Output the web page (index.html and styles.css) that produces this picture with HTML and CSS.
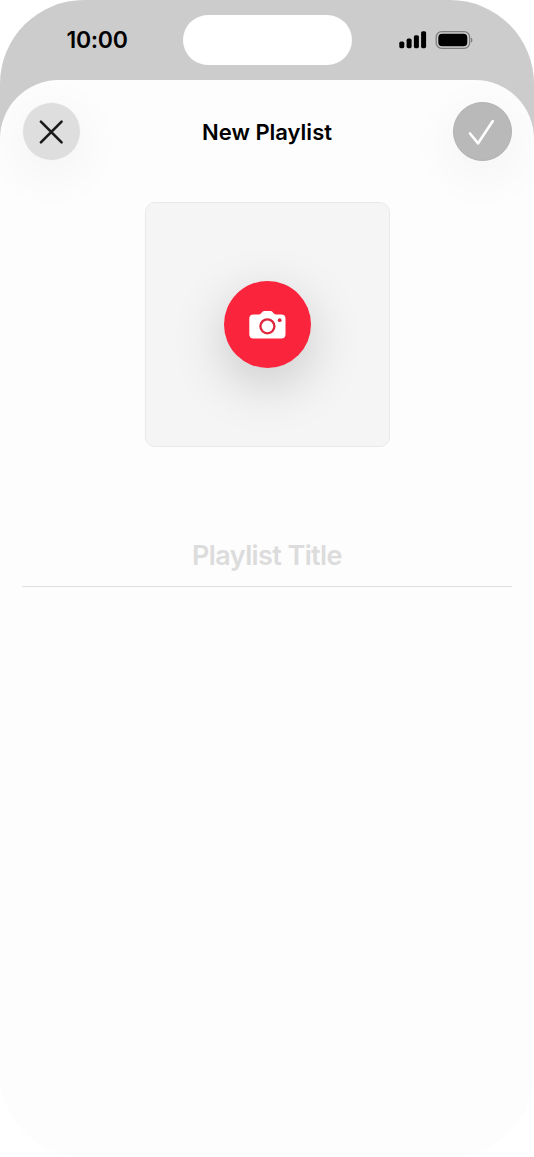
FILE: index.html
```html
<!DOCTYPE html>
<html lang="en">
<head>
    <meta charset="UTF-8">
    <meta name="viewport" content="width=device-width, initial-scale=1.0">
    <title>New Playlist</title>
    <link rel="stylesheet" href="styles.css">
</head>
<body>

    <div class="phone">
        <!-- Status Bar -->
        <header class="status-bar">
            <span class="time">10:00</span>
            <div class="island"></div>
            <div class="status-icons">
                <svg class="signal" width="28" height="18" viewBox="0 0 28 18">
                    <rect x="0.3" y="10.6" width="5" height="6.6" rx="1.6"/>
                    <rect x="7.6" y="7.6" width="5" height="9.6" rx="1.6"/>
                    <rect x="14.9" y="4.2" width="5" height="13" rx="1.6"/>
                    <rect x="22.1" y="0.2" width="5" height="17" rx="1.6"/>
                </svg>
                <svg class="battery" width="38" height="18" viewBox="0 0 38 18">
                    <rect x="1.2" y="0.7" width="33.4" height="16.6" rx="5.4" fill="none" stroke="#7f7f7f" stroke-width="1.3"/>
                    <rect x="3.3" y="2.7" width="29" height="12.6" rx="3.8"/>
                    <path d="M35.9 6.4c2 .7 2 4.5 0 5.2z" fill="#7f7f7f"/>
                </svg>
            </div>
        </header>

        <!-- New Playlist Sheet -->
        <main class="sheet">
            <div class="nav-bar">
                <button class="nav-btn close-btn" aria-label="Close">
                    <svg width="26" height="26" viewBox="0 0 26 26">
                        <path d="M1.9 2.6L22.6 23.4M22.6 2.6L1.9 23.4" stroke="#1a1a1a"/>
                    </svg>
                </button>
                <h1>New Playlist</h1>
                <button class="nav-btn done-btn" aria-label="Done">
                    <svg width="28" height="28" viewBox="0 0 28 28">
                        <path d="M2 15.5L10.1 25.3L24.8 3" stroke="#ffffff"/>
                    </svg>
                </button>
            </div>

            <div class="cover">
                <button class="camera-btn" aria-label="Add photo">
                    <svg width="38" height="30" viewBox="0 0 38 30">
                        <path d="M5.5 4.4H10.4Q12 4.4 13 3.4L14 2.2Q15 1 16.5 1H22.3Q23.8 1 24.8 2.2L25.8 3.4Q26.8 4.4 28.4 4.4H33.3Q37.5 4.4 37.5 8.6V24.3Q37.5 28.5 33.3 28.5H5.5Q1.3 28.5 1.3 24.3V8.6Q1.3 4.4 5.5 4.4Z" fill="#ffffff"/>
                        <circle cx="19.4" cy="16.3" r="7" fill="none" stroke="#e0263c" stroke-width="2.3"/>
                        <circle cx="31.7" cy="10.2" r="1.9" fill="#e0263c"/>
                    </svg>
                </button>
            </div>

            <input class="title-input" type="text" placeholder="Playlist Title">
        </main>
    </div>

</body>
</html>
```
FILE: styles.css
```css
/* Reset */
* {
    margin: 0;
    padding: 0;
    box-sizing: border-box;
    font-family: Inter, "Liberation Sans", sans-serif;
}

body {
    background-color: #ffffff;
}

button {
    border: none;
    cursor: pointer;
}

svg {
    display: block;
}

/* Phone Layout */
.phone {
    width: 534px;
    height: 1157px;
    display: flex;
    flex-direction: column;
    overflow: hidden;
    border-radius: 84px;
    background: linear-gradient(#cccccc 240px, #fdfdfd 240px);
}

/* Status Bar */
.status-bar {
    height: 80px;
    display: grid;
    grid-template-columns: 182.5px 169px 1fr;
    align-items: center;
}

.time {
    padding-left: 66.5px;
    font-size: 23px;
    font-weight: 600;
    line-height: 28px;
    letter-spacing: -0.3px;
}

.island {
    height: 50px;
    border-radius: 25px;
    background-color: #ffffff;
}

.status-icons {
    display: flex;
    gap: 8px;
    padding-left: 47.5px;
}

/* Sheet */
.sheet {
    flex: 1;
    display: flex;
    flex-direction: column;
    align-items: center;
    padding: 22px 22px 0;
    border-radius: 59px 59px 0 0;
    background-color: #fdfdfd;
    overflow: hidden;
}

.nav-bar {
    width: 100%;
    display: flex;
    justify-content: space-between;
    align-items: center;
}

.nav-bar h1 {
    font-size: 22px;
    font-weight: 600;
    line-height: 28px;
    letter-spacing: 0;
}

.nav-btn {
    width: 59px;
    height: 59px;
    display: flex;
    align-items: center;
    justify-content: center;
    border-radius: 50%;
    box-shadow: 0 12px 54px rgba(0, 0, 0, 0.06);
}

.nav-btn svg {
    fill: none;
    stroke-width: 2.6;
    stroke-linecap: round;
    stroke-linejoin: round;
}

.close-btn {
    border: 1px solid #f8f8f8;
    background-color: #dedede;
}

.done-btn {
    border: 1px solid #b0b0b0;
    background-color: #b9b9b9;
}

/* Cover */
.cover {
    width: 245px;
    height: 245px;
    display: flex;
    align-items: center;
    justify-content: center;
    margin-top: 41px;
    border: 1px solid #e9e9e9;
    border-radius: 10px;
    background-color: #f5f5f5;
}

.camera-btn {
    width: 87px;
    height: 87px;
    display: flex;
    align-items: center;
    justify-content: center;
    border-radius: 50%;
    background-color: #fa243c;
    box-shadow: 0 16px 54px rgba(0, 0, 0, 0.19);
}

/* Title Field */
.title-input {
    width: 100%;
    height: 62px;
    margin-top: 78px;
    border: none;
    border-bottom: 1px solid #e0e0e0;
    outline: none;
    background: none;
    font-size: 27px;
    font-weight: 600;
    letter-spacing: -0.6px;
    text-align: center;
}

.title-input::placeholder {
    color: #dcdcdc;
}
```
